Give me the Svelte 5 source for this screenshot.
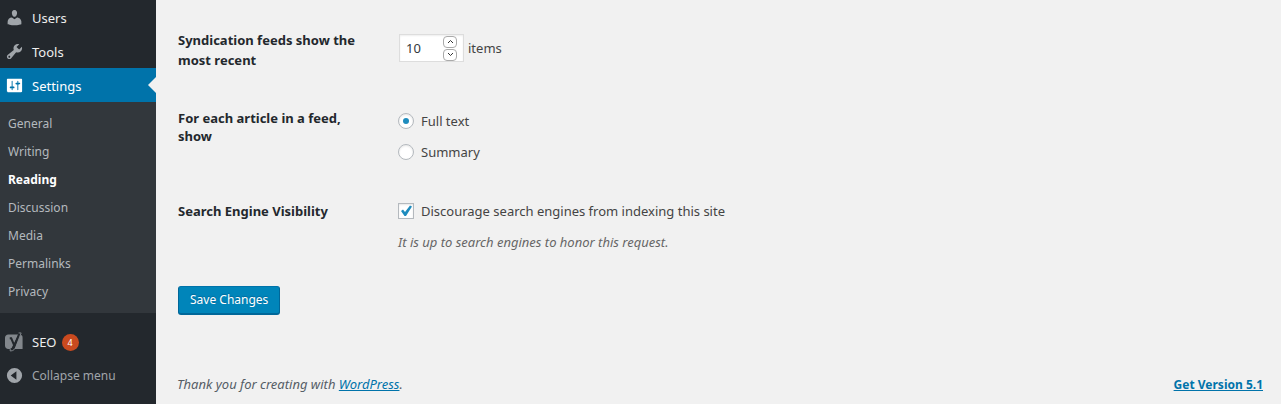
<script>
    const icons = {
        users: "M10 9.25c-2.27 0-2.73-3.44-2.73-3.44C7 4.02 7.82 2 9.97 2c2.16 0 2.98 2.02 2.71 3.81 0 0-.41 3.44-2.68 3.44zm0 2.57L12.72 10c2.39 0 4.52 2.33 4.52 4.53v2.49s-3.65 1.13-7.24 1.13c-3.65 0-7.24-1.13-7.24-1.13v-2.49c0-2.25 1.94-4.48 4.47-4.48z",
        tools: "M16.68 9.77c-1.34 1.34-3.3 1.67-4.95.99l-5.41 6.52c-.99.99-2.59.99-3.58 0s-.99-2.59 0-3.57l6.52-5.42c-.68-1.65-.35-3.61.99-4.95 1.28-1.28 3.12-1.62 4.72-1.06l-2.89 2.89 2.82 2.82 2.86-2.87c.53 1.58.18 3.39-1.08 4.65zM3.81 16.21c.4.39 1.04.39 1.43 0 .4-.4.4-1.04 0-1.43-.39-.4-1.03-.4-1.43 0-.39.39-.39 1.03 0 1.43z",
        settings: "M18 16V4c0-.55-.45-1-1-1H3c-.55 0-1 .45-1 1v12c0 .55.45 1 1 1h14c.55 0 1-.45 1-1zM8 11h1c.55 0 1 .45 1 1s-.45 1-1 1H8v1.5c0 .28-.22.5-.5.5s-.5-.22-.5-.5V13H6c-.55 0-1-.45-1-1s.45-1 1-1h1V5.5c0-.28.22-.5.5-.5s.5.22.5.5V11zm5-2h-1c-.55 0-1-.45-1-1s.45-1 1-1h1V5.5c0-.28.22-.5.5-.5s.5.22.5.5V7h1c.55 0 1 .45 1 1s-.45 1-1 1h-1v5.5c0 .28-.22.5-.5.5s-.5-.22-.5-.5V9z",
    };

    const menu = [
        { title: "Users", icon: "users" },
        { title: "Tools", icon: "tools" },
        { title: "Settings", icon: "settings" },
    ];
    const submenu = ["General", "Writing", "Reading", "Discussion", "Media", "Permalinks", "Privacy"];

    let items = $state(10);
    let feed = $state("full");
    let discourage = $state(true);
</script>

<div class="admin">
    <nav class="sidebar">
        {#each menu as { title, icon }}
            <a href="#{icon}" class="item" class:active={icon === "settings"}>
                <svg viewBox="0 0 20 20"><path d={icons[icon]} fill-rule="evenodd" /></svg>
                {title}
            </a>
        {/each}
        <ul class="submenu">
            {#each submenu as title}
                <li><a href="#{title}" class:current={title === "Reading"}>{title}</a></li>
            {/each}
        </ul>
        <a href="#seo" class="item">
            <svg class="seo" viewBox="0 0 20 20">
                <path fill="#82878c" d="M3.500 2.500H14L6.500 18h-3C1.500 18 0 16.500 0 14.500V6c0-2 1.500-3.500 3.500-3.500zM16.500 3C18 3.500 18.500 4.500 18.500 6v12H10z" />
                <path fill="none" stroke="#23282d" stroke-width="2.200" d="M5 6.500h1.500l3 7M15.500 1L10 14.500c-1 2.500-2 4-4.500 4" />
                <path fill="none" stroke="#82878c" d="M14.300 1h2.700l-5.500 14.500c-1 2.500-2.500 4.500-6 4.500v-2.500" />
            </svg>
            SEO <span class="badge">4</span>
        </a>
        <button type="button" class="item collapse">
            <svg viewBox="0 0 20 20">
                <path fill-rule="evenodd" d="M10 2a8 8 0 1 0 0 16a8 8 0 0 0 0-16zM12 5.500v9L6 10z" />
            </svg>
            Collapse menu
        </button>
    </nav>

    <main>
        <form onsubmit={(e) => e.preventDefault()}>
            <div class="row feeds">
                <label class="heading" for="rss">Syndication feeds show the most recent</label>
                <div class="inline">
                    <span class="number">
                        <input type="number" id="rss" min="1" bind:value={items} />
                        <span class="spin">
                            <button type="button" aria-label="Increase" onclick={() => items++}>
                                <svg viewBox="0 0 7 5"><path d="M1 4l2.500-2.500L6 4" /></svg>
                            </button>
                            <button type="button" aria-label="Decrease" onclick={() => items--}>
                                <svg viewBox="0 0 7 5"><path d="M1 1l2.500 2.500L6 1" /></svg>
                            </button>
                        </span>
                    </span>
                    <label for="rss">items</label>
                </div>
            </div>

            <div class="row article" role="radiogroup" aria-labelledby="feed-heading">
                <div class="heading" id="feed-heading">For each article in a feed, show</div>
                <div class="choices">
                    <label><input type="radio" name="feed" value="full" bind:group={feed} />Full text</label>
                    <label><input type="radio" name="feed" value="summary" bind:group={feed} />Summary</label>
                </div>
            </div>

            <div class="row visibility">
                <div class="heading">Search Engine Visibility</div>
                <div class="choices">
                    <label>
                        <span class="check">
                            <input type="checkbox" bind:checked={discourage} />
                            {#if discourage}
                                <svg viewBox="0 0 16 16"><path d="M3 8l2-1.500 2 2.500L12 2.500l2 1L8 13H6.500z" /></svg>
                            {/if}
                        </span>Discourage search engines from indexing this site
                    </label>
                    <p>It is up to search engines to honor this request.</p>
                </div>
            </div>

            <button type="submit" class="save">Save Changes</button>
        </form>

        <footer>
            <em>Thank you for creating with <a href="#wordpress">WordPress</a>.</em>
            <a class="version" href="#update">Get Version 5.1</a>
        </footer>
    </main>
</div>

<style>
    :global(body) {
        margin: 0;
        background: #f1f1f1;
    }
    .admin {
        display: flex;
        min-height: 100vh;
        font-family: "Noto Sans", "Open Sans", sans-serif;
        font-size: 13px;
        line-height: 20px;
        color: #444;
    }
    input,
    button {
        font: inherit;
        margin: 0;
        box-sizing: border-box;
    }

    /* Sidebar */
    .sidebar {
        flex: 0 0 156px;
        background: #23282d;
    }
    .item {
        position: relative;
        display: flex;
        align-items: center;
        gap: 8px;
        width: 100%;
        height: 34px;
        box-sizing: border-box;
        padding: 2px 0 0 5px;
        color: #eee;
        text-decoration: none;
    }
    .item svg {
        width: 19px;
        height: 19px;
        margin-top: -2px;
        fill: #a0a5aa;
    }
    .item .seo {
        overflow: visible;
    }
    .active {
        background: #0073aa;
        color: #fff;
    }
    .active svg {
        fill: #fff;
    }
    .active::after {
        content: "";
        position: absolute;
        right: 0;
        top: 9px;
        border: 8px solid transparent;
        border-left: 0;
        border-right-color: #f1f1f1;
    }
    .submenu {
        list-style: none;
        margin: 0 0 11px;
        padding: 8px 0 7px;
        background: #32373c;
    }
    .submenu a {
        display: block;
        padding: 4px 8px;
        font-size: 12px;
        color: #b4b9be;
        text-decoration: none;
    }
    .submenu .current {
        color: #fff;
        font-weight: 700;
    }
    .badge {
        width: 17px;
        margin-left: -3px;
        border-radius: 9px;
        background: #ca4a1f;
        color: #fff;
        font-size: 9px;
        line-height: 17px;
        text-align: center;
    }
    .collapse {
        border: 0;
        background: none;
        color: #a0a5aa;
        font-size: 12px;
    }

    /* Settings form */
    main {
        flex: 1;
        padding: 30px 18px 0 22px;
    }
    .row {
        display: grid;
        grid-template-columns: 190px 1fr;
        column-gap: 30px;
    }
    .heading {
        font-weight: 700;
        color: #23282d;
    }
    .feeds {
        min-height: 79px;
    }
    .article {
        min-height: 92px;
    }
    .article .heading {
        line-height: 18px;
    }
    .visibility {
        min-height: 85px;
    }
    .inline {
        display: flex;
        align-items: center;
        gap: 4px;
        height: 36px;
    }
    .number {
        display: flex;
        align-items: center;
        width: 65px;
        height: 28px;
        margin-left: 1px;
        box-sizing: border-box;
        padding-right: 6px;
        border: 1px solid #ddd;
        background: #fff;
        box-shadow: inset 0 1px 2px rgba(0, 0, 0, 0.07);
    }
    .number input {
        flex: 1;
        min-width: 0;
        padding: 0 0 0 6px;
        border: 0;
        background: none;
        color: #32373c;
        appearance: textfield;
    }
    .number input::-webkit-inner-spin-button {
        appearance: none;
    }
    .spin {
        display: grid;
        gap: 1px;
    }
    .spin button {
        display: grid;
        place-items: center;
        width: 14px;
        height: 12px;
        padding: 0;
        border: 1px solid #aaa;
        border-radius: 4px;
        background: #fff;
    }
    .spin svg {
        width: 7px;
        height: 5px;
        fill: none;
        stroke: #333;
    }
    .choices {
        display: grid;
        align-content: start;
        gap: 11px;
    }
    .choices label {
        display: flex;
        align-items: center;
        gap: 7px;
    }
    .article .choices {
        padding-top: 2px;
    }
    .choices input {
        appearance: none;
        width: 16px;
        height: 16px;
        border: 1px solid #b4b9be;
        background: #fff;
        box-shadow: inset 0 1px 2px rgba(0, 0, 0, 0.1);
    }
    input[type="radio"] {
        display: grid;
        place-items: center;
        border-radius: 50%;
    }
    input[type="radio"]:checked::before {
        content: "";
        width: 6px;
        height: 6px;
        border-radius: 50%;
        background: #1e8cbe;
    }
    .check {
        display: grid;
    }
    .check > * {
        grid-area: 1 / 1;
    }
    .check svg {
        z-index: 1;
        width: 16px;
        height: 16px;
        fill: #1e8cbe;
        pointer-events: none;
    }
    p {
        margin: 0;
        color: #666;
        font-style: italic;
    }
    .save {
        height: 29px;
        padding: 0 11px;
        border: 1px solid #006799;
        border-top-color: #0073aa;
        border-bottom-width: 2px;
        border-radius: 3px;
        background: #0085ba;
        color: #fff;
        font-size: 12px;
        line-height: 26px;
        text-shadow: 0 -1px 1px #006799;
    }
    footer {
        display: flex;
        justify-content: space-between;
        margin: 59px 0 0 -1px;
        color: #555d66;
    }
    footer a {
        color: #0073aa;
    }
    .version {
        font-size: 12px;
        font-weight: 700;
        line-height: 22px;
    }
</style>
